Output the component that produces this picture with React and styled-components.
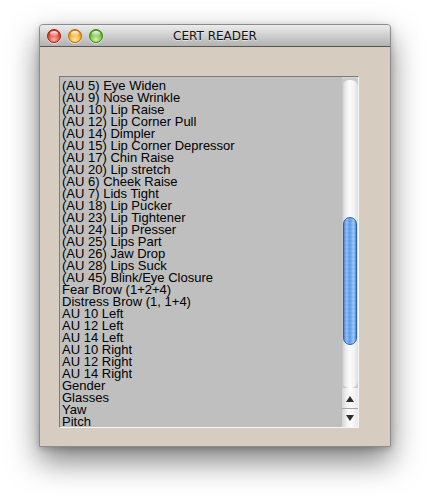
import styled, { createGlobalStyle } from "styled-components";

const GlobalStyle = createGlobalStyle`
  body {
    margin: 0;
    background: #ffffff;
  }
`;

const Page = styled.div`
  padding: 24px 0 0 39px;
  height: 478px;
`;

const Window = styled.div`
  box-sizing: border-box;
  width: 352px;
  height: 423px;
  display: flex;
  flex-direction: column;
  background: #d7ccc0;
  border: 1px solid #8c8c8c;
  border-radius: 4px 4px 0 0;
  box-shadow: 0 14px 30px rgba(0, 0, 0, 0.5), 0 2px 6px rgba(0, 0, 0, 0.2);
  overflow: hidden;
`;

const TitleBar = styled.div`
  height: 21px;
  display: grid;
  grid-template-columns: 1fr auto 1fr;
  align-items: center;
  background: linear-gradient(to bottom, #ececec 0%, #d2d2d2 45%, #b2b2b2 100%);
  border-bottom: 1px solid #565656;
`;

const Lights = styled.div`
  display: flex;
  gap: 7px;
  padding-left: 7px;
`;

const colors = {
  red: ["#f7b0a8", "#e2483c", "#a31a10"],
  yellow: ["#fde8a8", "#f2aa26", "#b86a06"],
  green: ["#d4f0b0", "#74bf3e", "#3c8616"],
};

const Light = styled.span`
  position: relative;
  width: 14px;
  height: 14px;
  border-radius: 50%;
  box-sizing: border-box;
  border: 1px solid ${(p) => colors[p.$c][2]};
  background: radial-gradient(
    circle at 50% 80%,
    ${(p) => colors[p.$c][0]} 0%,
    ${(p) => colors[p.$c][1]} 55%,
    ${(p) => colors[p.$c][2]} 100%
  );
  box-shadow: 0 1px 1px rgba(255, 255, 255, 0.6);

  &::after {
    content: "";
    position: absolute;
    left: 2px;
    top: 1px;
    width: 8px;
    height: 5px;
    border-radius: 50%;
    background: linear-gradient(to bottom, rgba(255, 255, 255, 0.95), rgba(255, 255, 255, 0.15));
  }
`;

const Title = styled.div`
  font-family: "DejaVu Sans", sans-serif;
  font-size: 12px;
  color: #111;
  text-shadow: 0 1px 0 rgba(255, 255, 255, 0.5);
  padding-top: 1px;
`;

const Body = styled.div`
  flex: 1;
  padding: 29px 0 0 19px;
`;

const ListBox = styled.div`
  box-sizing: border-box;
  width: 300px;
  height: 352px;
  display: flex;
  background: #bfbfbf;
  border-top: 1px solid #7a7a7a;
  border-left: 1px solid #7a7a7a;
  border-right: 1px solid #f6f6f6;
  border-bottom: 1px solid #f6f6f6;
`;

const Items = styled.div`
  flex: 1;
  overflow: hidden;
  padding: 3px 0 0 2px;
  font-family: "Liberation Sans", Arial, sans-serif;
  font-size: 13px;
  line-height: 12px;
  color: #000;
`;

const Item = styled.div`
  white-space: nowrap;
`;

const Scrollbar = styled.div`
  width: 16px;
  display: flex;
  flex-direction: column;
  background: #c9c9c9;
`;

const TopCap = styled.div`
  height: 3px;
  background: linear-gradient(to bottom, #d8d8d8, #c6c6c6);
`;

const Track = styled.div`
  flex: 1;
  padding: 137px 1px 0 1px;
  border-radius: 7px;
  background: linear-gradient(to right, #c4c4c4 0%, #e6e6e6 18%, #fbfbfb 45%, #f4f4f4 75%, #dedede 100%);
`;

const Thumb = styled.div`
  box-sizing: border-box;
  height: 128px;
  border-radius: 7px;
  border: 1px solid #2c5fb3;
  background:
    repeating-linear-gradient(to bottom, rgba(255, 255, 255, 0.08) 0 2px, rgba(255, 255, 255, 0) 2px 4px),
    linear-gradient(to right, #4b82d6 0%, #8cbcf2 22%, #5c98e6 45%, #6aa6ee 60%, #9ac6f6 80%, #4a80d4 100%);
`;

const ArrowButton = styled.div`
  height: ${(p) => p.$h}px;
  display: flex;
  align-items: center;
  justify-content: center;
  background: linear-gradient(to right, #d4d4d4 0%, #f2f2f2 30%, #fdfdfd 55%, #e8e8e8 100%);
  border-top: 1px solid ${(p) => (p.$divider ? "#a6a6a6" : "transparent")};
`;

const Arrow = ({ down }) => (
  <svg width="8" height="6" viewBox="0 0 8 6">
    <polygon points={down ? "0,0 8,0 4,6" : "4,0 8,6 0,6"} fill="#2e2e2e" />
  </svg>
);

const items = [
  "(AU 5) Eye Widen",
  "(AU 9) Nose Wrinkle",
  "(AU 10) Lip Raise",
  "(AU 12) Lip Corner Pull",
  "(AU 14) Dimpler",
  "(AU 15) Lip Corner Depressor",
  "(AU 17) Chin Raise",
  "(AU 20) Lip stretch",
  "(AU 6) Cheek Raise",
  "(AU 7) Lids Tight",
  "(AU 18) Lip Pucker",
  "(AU 23) Lip Tightener",
  "(AU 24) Lip Presser",
  "(AU 25) Lips Part",
  "(AU 26) Jaw Drop",
  "(AU 28) Lips Suck",
  "(AU 45) Blink/Eye Closure",
  "Fear Brow (1+2+4)",
  "Distress Brow (1, 1+4)",
  "AU 10 Left",
  "AU 12 Left",
  "AU 14 Left",
  "AU 10 Right",
  "AU 12 Right",
  "AU 14 Right",
  "Gender",
  "Glasses",
  "Yaw",
  "Pitch",
];

export default function App() {
  return (
    <>
      <GlobalStyle />
      <Page>
        <Window>
          <TitleBar>
            <Lights>
              <Light $c="red" />
              <Light $c="yellow" />
              <Light $c="green" />
            </Lights>
            <Title>CERT READER</Title>
            <div />
          </TitleBar>
          <Body>
            <ListBox>
              <Items>
                {items.map((t) => (
                  <Item key={t}>{t}</Item>
                ))}
              </Items>
              <Scrollbar>
                <TopCap />
                <Track>
                  <Thumb />
                </Track>
                <ArrowButton $h={19}>
                  <Arrow />
                </ArrowButton>
                <ArrowButton $h={18} $divider>
                  <Arrow down />
                </ArrowButton>
              </Scrollbar>
            </ListBox>
          </Body>
        </Window>
      </Page>
    </>
  );
}
